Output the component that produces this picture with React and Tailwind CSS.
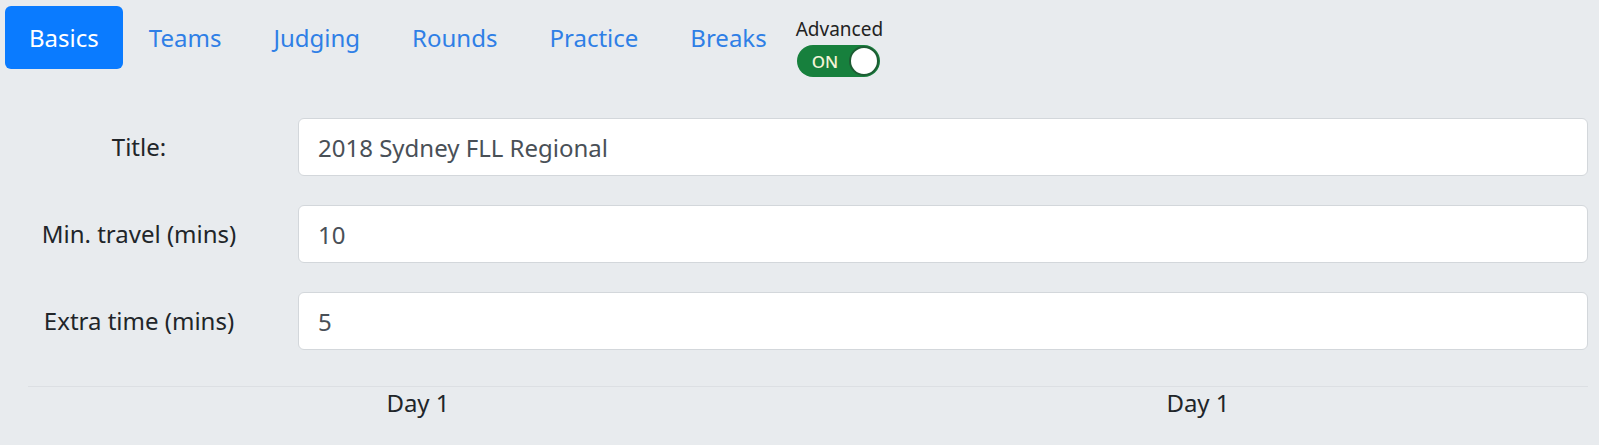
import { useState } from 'react';

const tabs = ['Basics', 'Teams', 'Judging', 'Rounds', 'Practice', 'Breaks'];

const fields = [
  { label: 'Title:', value: '2018 Sydney FLL Regional' },
  { label: 'Min. travel (mins)', value: '10' },
  { label: 'Extra time (mins)', value: '5' },
];

const App = () => {
  const [active, setActive] = useState('Basics');
  const [advanced, setAdvanced] = useState(true);

  return (
    <div className="min-h-screen w-full bg-[#e8ebee] text-[#212529] font-['Noto_Sans',sans-serif]">
      {/* Tabs */}
      <div className="flex items-start pl-[5px] pt-[6px]">
        {tabs.map((tab) => (
          <button
            key={tab}
            onClick={() => setActive(tab)}
            className={
              active === tab
                ? 'h-[63px] px-[24px] rounded-[6px] bg-[#0a7bff] text-white text-[24px] leading-none'
                : 'h-[63px] px-[26px] rounded-[6px] text-[#2f7fe6] text-[24px] leading-none'
            }
          >
            {tab}
          </button>
        ))}

        {/* Advanced toggle */}
        <div className="ml-[3px] pt-[11px] flex flex-col items-start">
          <span className="text-[19px] leading-[24px] text-[#222]">Advanced</span>
          <button
            onClick={() => setAdvanced(!advanced)}
            className={
              advanced
                ? 'mt-[4px] ml-[1px] w-[83px] h-[32px] rounded-full bg-[#17803d] flex items-center justify-between pl-[15px] pr-[1px]'
                : 'mt-[4px] ml-[1px] w-[83px] h-[32px] rounded-full bg-[#9aa0a6] flex items-center justify-between pl-[15px] pr-[1px]'
            }
          >
            <span className="text-[17px] font-medium text-[#f4f4d8] leading-none">
              {advanced ? 'ON' : 'OFF'}
            </span>
            <span className="w-[30px] h-[30px] rounded-full bg-white border-[2px] border-[#1d5c33]" />
          </button>
        </div>
      </div>

      {/* Form */}
      <div className="ml-[28px] w-[1560px] pt-[41px]">
        <div className="flex flex-col gap-[29px]">
          {fields.map((f) => (
            <div key={f.label} className="grid grid-cols-[222px_1fr] gap-x-[48px] items-center">
              <label className="text-center text-[24px] leading-none">{f.label}</label>
              <input
                type="text"
                defaultValue={f.value}
                className="h-[58px] w-full rounded-[6px] border border-[#d3d7db] bg-white px-[19px] text-[24px] text-[#495057] outline-none"
              />
            </div>
          ))}
        </div>

        <div className="mt-[36px] border-t border-[#dcdfe3] grid grid-cols-2">
          <div className="text-center text-[24px] pt-[1px] leading-[30px]">Day 1</div>
          <div className="text-center text-[24px] pt-[1px] leading-[30px]">Day 1</div>
        </div>
      </div>
    </div>
  );
};

export default App;
